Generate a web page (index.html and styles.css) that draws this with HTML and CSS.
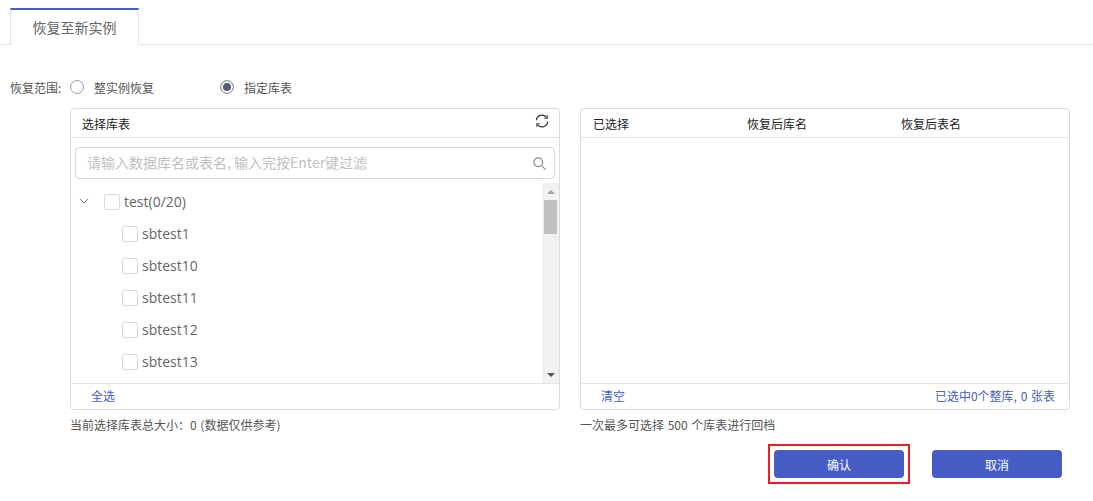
FILE: index.html
```html
<!DOCTYPE html>
<html lang="zh-CN">
<head>
    <meta charset="UTF-8">
    <title>恢复至新实例</title>
    <link rel="stylesheet" href="styles.css">
</head>
<body>
    <div class="tabs">
        <div class="tab">恢复至新实例</div>
    </div>

    <div class="scope">
        <span class="scope-label">恢复范围:</span>
        <label class="radio radio-first"><i class="radio-dot"></i>整实例恢复</label>
        <label class="radio"><i class="radio-dot checked"></i>指定库表</label>
    </div>

    <div class="panels">
        <div class="col col-left">
            <div class="panel">
                <div class="panel-head">
                    <span>选择库表</span>
                    <svg class="refresh" width="14" height="14" viewBox="0 0 14 14" fill="none" stroke="#333" stroke-width="1.3">
                        <path d="M1.4 6.2A5.5 5.5 0 0 1 11.2 3.2"/>
                        <path d="M12.6 7.8A5.5 5.5 0 0 1 2.8 10.8"/>
                        <path d="M12.2 1.2v3H9.2M1.8 12.8v-3h3" stroke-width="1.1"/>
                    </svg>
                </div>
                <div class="search">
                    <span class="search-text">请输入数据库名或表名, 输入完按Enter键过滤</span>
                    <svg width="13" height="13" viewBox="0 0 13 13" fill="none" stroke="#8c8c8c" stroke-width="1.2">
                        <circle cx="5.2" cy="5.2" r="4.4"/>
                        <path d="M8.4 8.4L12.6 12.6"/>
                    </svg>
                </div>
                <div class="tree-wrap">
                    <ul class="tree">
                        <li class="node">
                            <svg class="caret" width="10" height="6" viewBox="0 0 10 6" fill="none" stroke="#777" stroke-width="1"><path d="M1 .8L5 5l4-4.2"/></svg>
                            <i class="check"></i>test(0/20)
                        </li>
                        <li class="node child"><i class="check"></i>sbtest1</li>
                        <li class="node child"><i class="check"></i>sbtest10</li>
                        <li class="node child"><i class="check"></i>sbtest11</li>
                        <li class="node child"><i class="check"></i>sbtest12</li>
                        <li class="node child"><i class="check"></i>sbtest13</li>
                    </ul>
                    <div class="scrollbar">
                        <i class="arrow-up"></i>
                        <i class="thumb"></i>
                        <i class="arrow-down"></i>
                    </div>
                </div>
                <div class="panel-foot"><a class="link">全选</a></div>
            </div>
            <p class="note">当前选择库表总大小：0 (数据仅供参考)</p>
        </div>

        <div class="col col-right">
            <div class="panel">
                <div class="panel-head head-columns">
                    <span>已选择</span>
                    <span>恢复后库名</span>
                    <span>恢复后表名</span>
                </div>
                <div class="selected-body"></div>
                <div class="panel-foot foot-split">
                    <a class="link">清空</a>
                    <a class="link">已选中0个整库, 0 张表</a>
                </div>
            </div>
            <p class="note">一次最多可选择 500 个库表进行回档</p>
        </div>
    </div>

    <div class="actions">
        <button class="btn btn-marked">确认</button>
        <button class="btn">取消</button>
    </div>
</body>
</html>
```

FILE: styles.css
```css
* {
    box-sizing: border-box;
    margin: 0;
    padding: 0;
}

body {
    width: 1093px;
    height: 501px;
    overflow: hidden;
    background: #fff;
    color: #555;
    font-family: "Noto Sans CJK SC", "Open Sans", sans-serif;
    font-size: 12px;
}

/* Tabs */
.tabs {
    height: 45px;
    padding: 8px 0 0 10px;
    border-bottom: 1px solid #dfe3f0;
}

.tab {
    width: 129px;
    height: 37px;
    background: #fff;
    border: 1px solid #dfe3f0;
    border-top: 2px solid #465dc5;
    border-bottom: none;
    font-size: 14px;
    line-height: 34px;
    text-align: center;
    color: #666;
}

/* Scope radios */
.scope {
    display: flex;
    align-items: center;
    height: 18px;
    margin-top: 33px;
    padding-left: 10px;
}

.scope-label {
    width: 60px;
}

.radio {
    display: flex;
    align-items: center;
    width: 150px;
}

.radio-dot {
    width: 14px;
    height: 14px;
    margin-right: 10px;
    border: 1px solid #9a9ea8;
    border-radius: 50%;
    background: #fff;
}

.radio-dot.checked {
    background: #565d78;
    box-shadow: inset 0 0 0 2px #fff;
}

/* Panels */
.panels {
    display: flex;
    gap: 20px;
    margin-top: 12px;
    padding-left: 70px;
}

.col {
    width: 490px;
}

.panel {
    display: flex;
    flex-direction: column;
    height: 302px;
    border: 1px solid #dcdcdc;
    border-radius: 4px;
}

.panel-head {
    display: flex;
    justify-content: space-between;
    align-items: center;
    flex: none;
    height: 29px;
    padding: 0 11px;
    border-bottom: 1px solid #e4e4e4;
    color: #222;
}

.head-columns {
    justify-content: flex-start;
    padding-left: 12px;
}

.head-columns span {
    width: 154px;
}

.refresh {
    margin-top: -4px;
    margin-right: -1px;
}

/* Search box */
.search {
    display: flex;
    justify-content: space-between;
    align-items: center;
    flex: none;
    height: 32px;
    margin: 9px 4px 0;
    padding: 0 8px 0 11px;
    border: 1px solid #d9d9d9;
    border-radius: 4px;
}

.search-text {
    margin-top: -3px;
    font-size: 14px;
    color: #c0c0c0;
}

/* Tree */
.tree-wrap {
    display: flex;
    flex: 1;
    min-height: 0;
    margin-top: 4px;
    overflow: hidden;
}

.tree {
    flex: 1;
    padding-top: 2px;
    list-style: none;
    font-family: "Open Sans", "Noto Sans CJK SC", sans-serif;
    font-size: 14px;
    color: #666;
}

.node {
    display: flex;
    align-items: center;
    height: 32px;
    padding-left: 8px;
}

.child {
    padding-left: 51px;
}

.caret {
    margin-right: 15px;
}

.check {
    width: 16px;
    height: 16px;
    margin-top: 2px;
    margin-right: 4px;
    border: 1px solid #d9d9d9;
    border-radius: 2px;
    background: #fff;
}

.scrollbar {
    display: flex;
    flex-direction: column;
    align-items: center;
    flex: none;
    width: 17px;
    background: #f1f1f1;
}

.arrow-up,
.arrow-down {
    width: 0;
    height: 0;
    border-left: 4px solid transparent;
    border-right: 4px solid transparent;
}

.arrow-up {
    margin-top: 7px;
    border-bottom: 4px solid #a3a3a3;
}

.arrow-down {
    margin-top: auto;
    margin-bottom: 6px;
    border-top: 4px solid #505050;
}

.thumb {
    width: 13px;
    height: 34px;
    margin-top: 6px;
    background: #c1c1c1;
}

.selected-body {
    flex: 1;
}

.panel-foot {
    display: flex;
    align-items: center;
    flex: none;
    height: 26px;
    padding: 0 14px 2px 20px;
    border-top: 1px solid #e4e4e4;
    word-spacing: 1px;
}

.foot-split {
    justify-content: space-between;
}

.link {
    color: #465dc5;
}

.note {
    margin-top: 6px;
    line-height: 17px;
    font-size: 12px;
    word-spacing: 1px;
    color: #555;
}

/* Buttons */
.actions {
    display: flex;
    justify-content: flex-end;
    gap: 28px;
    margin-top: 17px;
    padding-right: 31px;
}

.btn {
    display: block;
    width: 130px;
    height: 28px;
    background: #465dc5;
    border: none;
    border-radius: 4px;
    color: #fff;
    font-family: inherit;
    font-size: 12px;
}

/* Red box drawn over the confirm button */
.btn-marked {
    position: relative;
}

.btn-marked::after {
    content: "";
    position: absolute;
    top: -6px;
    right: -6px;
    bottom: -6px;
    left: -6px;
    border: 2px solid #ed1c24;
}
```
